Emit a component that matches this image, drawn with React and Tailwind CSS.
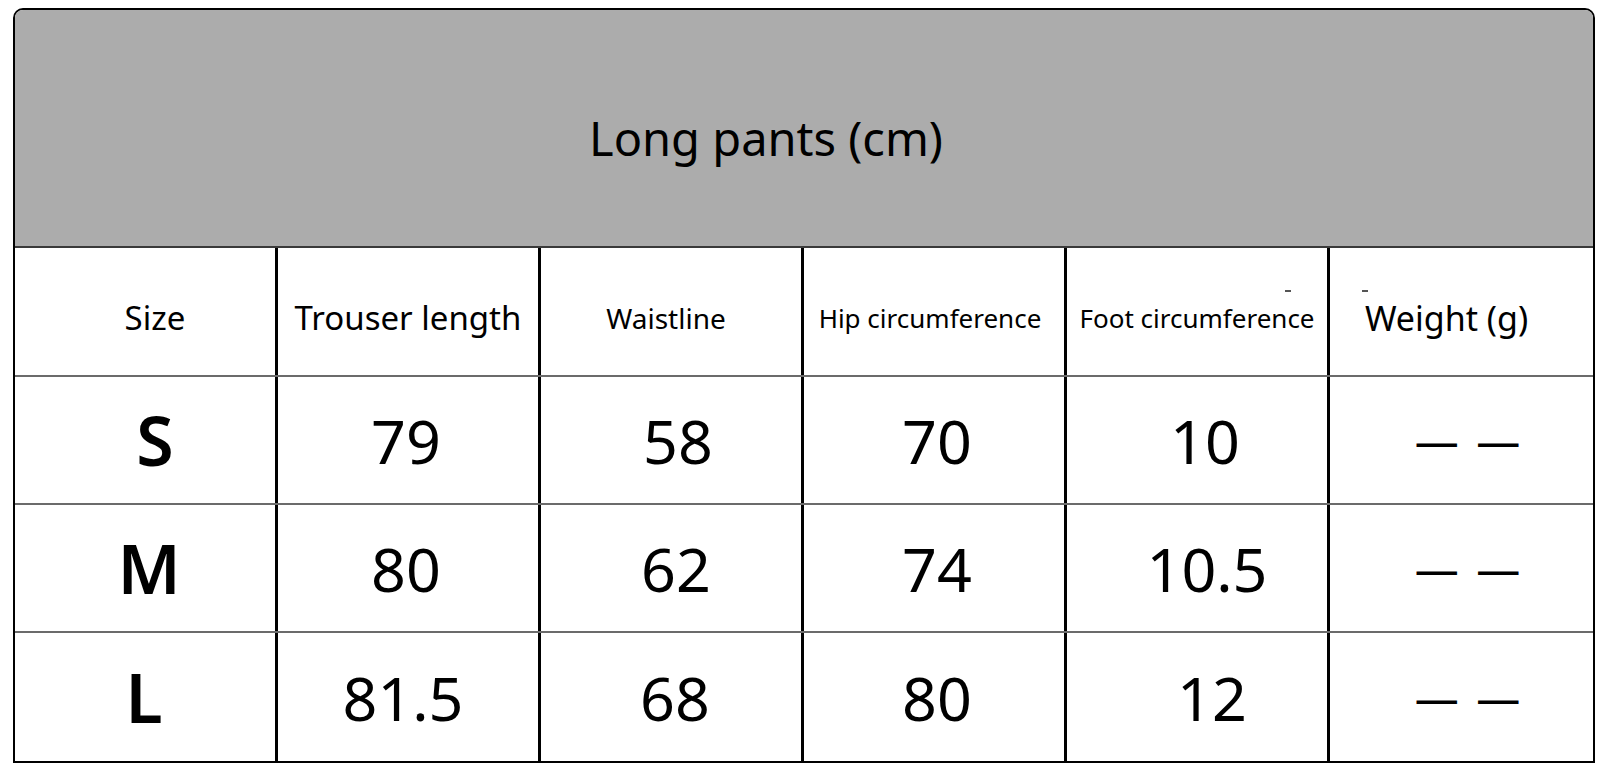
const headers = [
  { label: "Size", cls: "text-[33px] pl-[20px]" },
  { label: "Trouser length", cls: "text-[33px]" },
  { label: "Waistline", cls: "text-[28px] pr-[10px]" },
  { label: "Hip circumference", cls: "text-[26px] pr-[8px]" },
  { label: "Foot circumference", cls: "text-[26px]" },
  { label: "Weight (g)", cls: "text-[34px] pr-[30px]" },
];

// value + nudge class per cell, so the figures sit where the print put them
const rows = [
  [
    ["S", "pl-[20px]"],
    ["79", "pr-[4px]"],
    ["58", "pl-[14px]"],
    ["70", "pl-[6px]"],
    ["10", "pl-[16px]"],
  ],
  [
    ["M", "pl-[8px]"],
    ["80", "pr-[4px]"],
    ["62", "pl-[10px]"],
    ["74", "pl-[6px]"],
    ["10.5", "pl-[20px]"],
  ],
  [
    ["L", "pr-[2px]"],
    ["81.5", "pr-[10px]"],
    ["68", "pl-[8px]"],
    ["80", "pl-[6px]"],
    ["12", "pl-[30px]"],
  ],
];

function Cell({ last, children, className = "" }) {
  return (
    <div
      className={`relative flex items-center justify-center ${last ? "" : "border-r-[3px] border-black"} ${className}`}
    >
      {children}
    </div>
  );
}

export default function App() {
  return (
    <div className="w-[1610px] h-[770px] bg-white pt-2 pl-[13px]" style={{ fontFamily: '"Noto Sans", "Open Sans", sans-serif' }}>
      <div className="w-[1582px] border-2 border-black rounded-t-[10px] overflow-hidden text-black">
        {/* title band */}
        <div className="h-[238px] bg-[#acacac] border-b-2 border-[#3a3a3a] flex items-center justify-center pt-[20px] pr-[76px]">
          <span className="text-[47px] leading-none">Long pants (cm)</span>
        </div>

        {/* header row */}
        <div className="grid grid-cols-6 h-[129px] border-b-2 border-[#6b6b6b]">
          {headers.map((h, i) => (
            <Cell key={h.label} last={i === headers.length - 1} className={`pt-3 ${h.cls}`}>
              <span className="leading-none whitespace-nowrap">{h.label}</span>
              {i === 4 && <span className="absolute top-[42px] right-[36px] w-[6px] h-[2px] bg-[#555]" />}
              {i === 5 && <span className="absolute top-[42px] left-[32px] w-[6px] h-[2px] bg-[#555]" />}
            </Cell>
          ))}
        </div>

        {/* size rows */}
        {rows.map((r, ri) => (
          <div
            key={r[0][0]}
            className={`grid grid-cols-6 h-[128px] ${ri < rows.length - 1 ? "border-b-2 border-[#6b6b6b]" : ""}`}
          >
            <Cell className={r[0][1]}>
              <span className="text-[68px] font-semibold leading-none">{r[0][0]}</span>
            </Cell>
            {r.slice(1).map(([v, nudge], i) => (
              <Cell key={i} className={nudge}>
                <span className="text-[61px] leading-none">{v}</span>
              </Cell>
            ))}
            <Cell last className="pl-[15px]">
              <span className="text-[44px] leading-none tracking-[3px]">— —</span>
            </Cell>
          </div>
        ))}
      </div>
    </div>
  );
}
